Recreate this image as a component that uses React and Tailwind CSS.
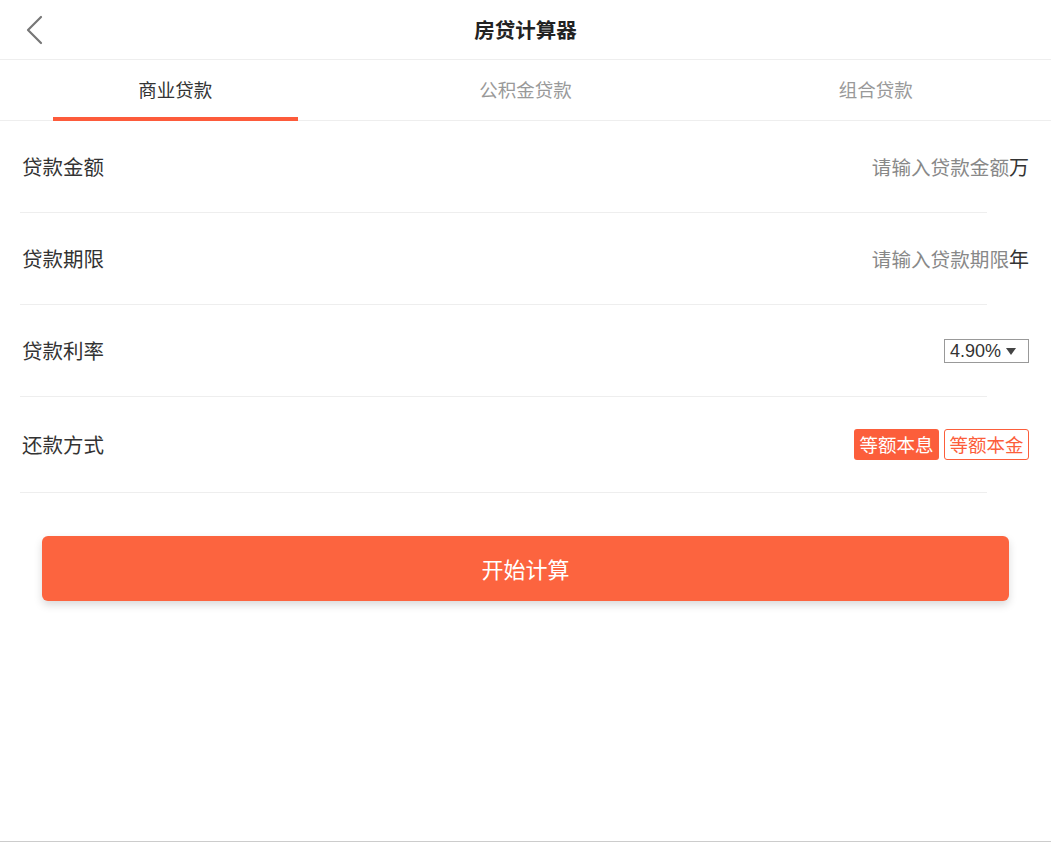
import React from "react";

const font = { fontFamily: '"Microsoft YaHei", "Noto Sans CJK SC", "Noto Sans", sans-serif' };

function Row({ label, children, tall }) {
  return (
    <div>
      <div className={`flex items-center justify-between pl-[22px] pr-[22px] ${tall ? "h-[95px]" : "h-[91px]"}`}>
        <span className="text-[20.5px] text-[#333]">{label}</span>
        <div className="flex items-center">{children}</div>
      </div>
      <div className="ml-[20px] w-[967px] h-px bg-[#eeeeee]" />
    </div>
  );
}

export default function App() {
  return (
    <div style={font} className="w-[1051px] h-[842px] bg-white border-b border-[#cccccc] flex flex-col">
      {/* Header */}
      <div className="relative h-[60px] flex items-center justify-center border-b border-[#eeeeee] shrink-0">
        <svg className="absolute left-[24px] top-[15px]" width="20" height="30" viewBox="0 0 20 30">
          <polyline points="17,2 4,15 17,28" fill="none" stroke="#777" strokeWidth="2.2" strokeLinecap="round" strokeLinejoin="round" />
        </svg>
        <span className="text-[20.5px] font-bold text-[#222]">房贷计算器</span>
      </div>

      {/* Tabs */}
      <div className="grid grid-cols-3 h-[61px] border-b border-[#eeeeee] shrink-0">
        {["商业贷款", "公积金贷款", "组合贷款"].map((t, i) => (
          <div key={t} className="relative flex items-center justify-center">
            <span className={`text-[18.5px] ${i === 0 ? "text-[#333]" : "text-[#999]"}`}>{t}</span>
            {i === 0 && <div className="absolute -bottom-px left-[15%] w-[70%] h-[4px] bg-[#fd5b3b]" />}
          </div>
        ))}
      </div>

      {/* Rows */}
      <Row label="贷款金额">
        <span className="text-[19.6px] text-[#888]">请输入贷款金额</span>
        <span className="text-[20px] text-[#333]">万</span>
      </Row>
      <Row label="贷款期限">
        <span className="text-[19.6px] text-[#888]">请输入贷款期限</span>
        <span className="text-[20px] text-[#333]">年</span>
      </Row>
      <Row label="贷款利率">
        <div className="flex items-center w-[85px] h-[24px] border border-[#999] pl-[5px] gap-[4px]">
          <span className="text-[18px] text-[#333] leading-none" style={{ fontFamily: '"Liberation Sans", Arial, sans-serif' }}>4.90%</span>
          <svg width="12" height="10" viewBox="0 0 12 10">
            <polygon points="1,2 11,2 6,9" fill="#444" />
          </svg>
        </div>
      </Row>
      <Row label="还款方式" tall>
        <div className="flex items-center gap-[5px]">
          <div className="h-[31px] w-[85px] flex items-center justify-center rounded-[3px] bg-[#fc5e3b] text-white text-[18.5px]">等额本息</div>
          <div className="h-[31px] w-[85px] flex items-center justify-center rounded-[3px] border border-[#fc5e3b] text-[#fc5e3b] text-[18.5px]">等额本金</div>
        </div>
      </Row>

      {/* Button */}
      <div className="px-[42px] pt-[43px]">
        <button className="w-[967px] h-[65px] rounded-[6px] bg-[#fc643f] text-white text-[22px] shadow-[0_4px_8px_rgba(0,0,0,0.15)] flex items-center justify-center">
          开始计算
        </button>
      </div>
    </div>
  );
}
